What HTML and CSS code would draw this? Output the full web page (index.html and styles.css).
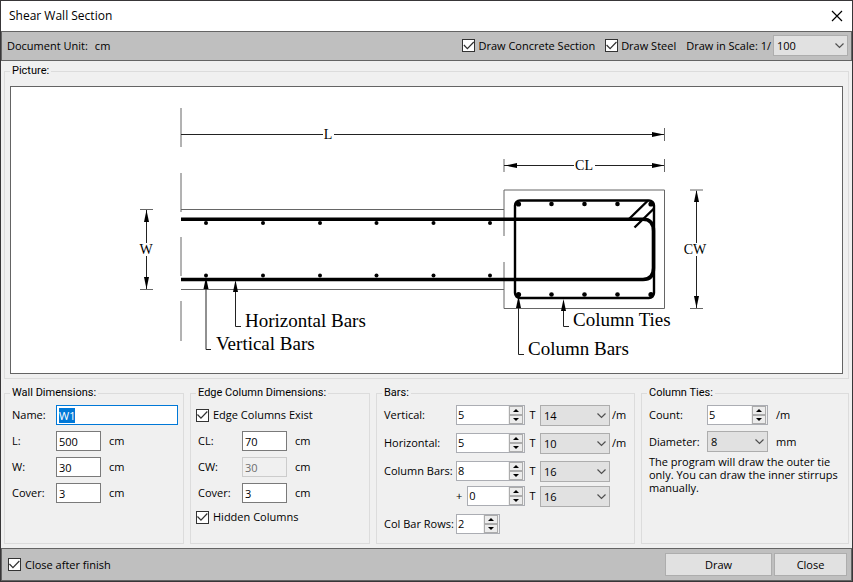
FILE: index.html
```html
<!DOCTYPE html>
<html lang="en">
<head>
<meta charset="utf-8">
<title>Shear Wall Section</title>
<link rel="stylesheet" href="styles.css">
</head>
<body>
<form class="window" onsubmit="return false">
  <header class="titlebar">
    <h1>Shear Wall Section</h1>
    <button type="button" class="close" aria-label="Close window"><svg width="12" height="12" viewBox="0 0 12 12"><path d="M1 1 L11 11 M11 1 L1 11"/></svg></button>
  </header>

  <div class="toolbar">
    <span class="unit">Document Unit:</span><span>cm</span>
    <div class="toolbar-options">
      <label class="check"><input type="checkbox" checked>Draw Concrete Section</label>
      <label class="check"><input type="checkbox" checked>Draw Steel</label>
      <label class="scale">Draw in Scale: 1/
        <span class="combo combo-scale"><select><option>100</option></select><svg viewBox="0 0 9 6"><path d="M0.5 0.5 L4.5 4.5 L8.5 0.5"/></svg></span>
      </label>
    </div>
  </div>

  <main class="content">
    <fieldset class="picture">
      <legend>Picture:</legend>
      <div class="canvas">
        <svg viewBox="11 87 831 286" role="img" aria-label="Shear wall section diagram">
          <defs>
            <path id="head" d="M0 0 L-2.5 12 L2.5 12 Z"/>
          </defs>
          <g class="outline">
            <path d="M181 108 V147 M181 173 V212 M181 237 V276 M181 301 V341"/>
            <path d="M181 209.5 H504 M181 289.5 H504"/>
            <path d="M504 236 V190 H664.5 V308.5 H504 V262"/>
            <path d="M664.5 128 V141 M504 159 V172 M664.5 159 V172"/>
            <path d="M140 209.5 H153 M140 289.5 H153 M690 190 H703 M690 308.5 H703"/>
          </g>
          <g class="dimension">
            <path d="M181 134.5 H323 M334 134.5 H664"/>
            <path d="M504 165.5 H574 M595 165.5 H664"/>
            <path d="M146.5 210 V243 M146.5 256 V289"/>
            <path d="M696.5 191 V243 M696.5 256 V308"/>
            <path d="M235.5 285 V326.5 H241 M206 285 V349.5 H211"/>
            <path d="M563.5 303 V326.5 H569 M518.5 303 V354.5 H524"/>
          </g>
          <g class="heads">
            <use href="#head" transform="translate(664 134.5) rotate(90)"/>
            <use href="#head" transform="translate(664 165.5) rotate(90)"/>
            <use href="#head" transform="translate(505 165.5) rotate(-90)"/>
            <use href="#head" transform="translate(146.5 210)"/>
            <use href="#head" transform="translate(146.5 289) rotate(180)"/>
            <use href="#head" transform="translate(696.5 190)"/>
            <use href="#head" transform="translate(696.5 308) rotate(180)"/>
            <use href="#head" transform="translate(235.5 280)"/>
            <use href="#head" transform="translate(206 277)"/>
            <use href="#head" transform="translate(563.5 299)"/>
            <use href="#head" transform="translate(518.5 296)"/>
          </g>
          <path class="bar" d="M181 219.3 H643 Q653.5 219.3 653.5 231 V268 Q653.5 279.5 643 279.5 H181"/>
          <rect class="tie" x="515" y="200.5" width="139" height="97.5" rx="5"/>
          <path class="tie" d="M628.5 219.5 L648 200.5 M634.5 227.5 L654 208.5"/>
          <g class="dots">
            <circle cx="206" cy="223" r="2"/><circle cx="263" cy="223" r="2"/><circle cx="320" cy="223" r="2"/><circle cx="376.5" cy="223" r="2"/><circle cx="433.5" cy="223" r="2"/><circle cx="490" cy="223" r="2"/>
            <circle cx="206" cy="275.5" r="2"/><circle cx="263" cy="275.5" r="2"/><circle cx="320" cy="275.5" r="2"/><circle cx="376.5" cy="275.5" r="2"/><circle cx="433.5" cy="275.5" r="2"/><circle cx="490" cy="275.5" r="2"/>
            <circle cx="518.5" cy="204" r="2.6"/><circle cx="551.5" cy="204" r="2.3"/><circle cx="584.5" cy="204" r="2.3"/><circle cx="617.5" cy="204" r="2.3"/><circle cx="651" cy="204" r="2.6"/>
            <circle cx="518.5" cy="294.5" r="2.6"/><circle cx="551.5" cy="294.5" r="2.3"/><circle cx="584.5" cy="294.5" r="2.3"/><circle cx="617.5" cy="294.5" r="2.3"/><circle cx="651" cy="294.5" r="2.6"/>
          </g>
          <g class="symbols">
            <text x="328" y="139">L</text>
            <text x="584" y="170">CL</text>
            <text x="146" y="254">W</text>
            <text x="695" y="254">CW</text>
          </g>
          <g class="names">
            <text x="245" y="327">Horizontal Bars</text>
            <text x="216" y="350">Vertical Bars</text>
            <text x="573" y="326">Column Ties</text>
            <text x="528" y="355">Column Bars</text>
          </g>
        </svg>
      </div>
    </fieldset>

    <div class="groups">
      <fieldset>
        <legend>Wall Dimensions:</legend>
        <div class="fields">
          <label for="name">Name:</label><input class="wide" id="name" type="text" value="W1">
          <label for="l">L:</label><input id="l" type="text" value="500"><span>cm</span>
          <label for="w">W:</label><input id="w" type="text" value="30"><span>cm</span>
          <label for="cover">Cover:</label><input id="cover" type="text" value="3"><span>cm</span>
        </div>
      </fieldset>

      <fieldset>
        <legend>Edge Column Dimensions:</legend>
        <div class="fields">
          <label class="check across"><input type="checkbox" checked>Edge Columns Exist</label>
          <label for="cl">CL:</label><input id="cl" type="text" value="70"><span>cm</span>
          <label for="cw">CW:</label><input id="cw" type="text" value="30" disabled><span>cm</span>
          <label for="ccover">Cover:</label><input id="ccover" type="text" value="3"><span>cm</span>
          <label class="check across last">
            <input type="checkbox" checked>Hidden Columns</label>
        </div>
      </fieldset>

      <fieldset>
        <legend>Bars:</legend>
        <div class="bars">
          <div class="bar-row">
            <label for="vert">Vertical:</label>
            <span class="spin"><input id="vert" type="number" value="5"><span class="steps"><button type="button" class="up" aria-label="More"></button><button type="button" class="down" aria-label="Less"></button></span></span>
            <label class="t" for="vert-d">T</label>
            <span class="combo"><select id="vert-d"><option>14</option></select><svg viewBox="0 0 9 6"><path d="M0.5 0.5 L4.5 4.5 L8.5 0.5"/></svg></span>
            <span>/m</span>
          </div>
          <div class="bar-row">
            <label for="horz">Horizontal:</label>
            <span class="spin"><input id="horz" type="number" value="5"><span class="steps"><button type="button" class="up" aria-label="More"></button><button type="button" class="down" aria-label="Less"></button></span></span>
            <label class="t" for="horz-d">T</label>
            <span class="combo"><select id="horz-d"><option>10</option></select><svg viewBox="0 0 9 6"><path d="M0.5 0.5 L4.5 4.5 L8.5 0.5"/></svg></span>
            <span>/m</span>
          </div>
          <div class="column-bars">
            <div class="bar-row">
              <label for="col">Column Bars:</label>
              <span class="spin"><input id="col" type="number" value="8"><span class="steps"><button type="button" class="up" aria-label="More"></button><button type="button" class="down" aria-label="Less"></button></span></span>
              <label class="t" for="col-d">T</label>
              <span class="combo"><select id="col-d"><option>16</option></select><svg viewBox="0 0 9 6"><path d="M0.5 0.5 L4.5 4.5 L8.5 0.5"/></svg></span>
            </div>
            <div class="bar-row">
              <span class="extra"><label for="add">+</label>
              <span class="spin"><input id="add" type="number" value="0"><span class="steps"><button type="button" class="up" aria-label="More"></button><button type="button" class="down" aria-label="Less"></button></span></span></span>
              <label class="t" for="add-d">T</label>
              <span class="combo"><select id="add-d"><option>16</option></select><svg viewBox="0 0 9 6"><path d="M0.5 0.5 L4.5 4.5 L8.5 0.5"/></svg></span>
            </div>
          </div>
          <div class="bar-row">
            <label for="rows">Col Bar Rows:</label>
            <span class="spin short"><input id="rows" type="number" value="2"><span class="steps"><button type="button" class="up" aria-label="More"></button><button type="button" class="down" aria-label="Less"></button></span></span>
          </div>
        </div>
      </fieldset>

      <fieldset>
        <legend>Column Ties:</legend>
        <div class="ties">
          <label for="count">Count:</label>
          <span class="spin"><input id="count" type="number" value="5"><span class="steps"><button type="button" class="up" aria-label="More"></button><button type="button" class="down" aria-label="Less"></button></span></span>
          <span>/m</span>
          <label for="dia">Diameter:</label>
          <span class="combo"><select id="dia"><option>8</option></select><svg viewBox="0 0 9 6"><path d="M0.5 0.5 L4.5 4.5 L8.5 0.5"/></svg></span>
          <span>mm</span>
        </div>
        <p class="note">The program will draw the outer tie only. You can draw the inner stirrups manually.</p>
      </fieldset>
    </div>
  </main>

  <footer class="footer">
    <label class="check"><input type="checkbox" checked>Close after finish</label>
    <div class="actions">
      <button type="submit" class="action draw">Draw</button>
      <button type="button" class="action">Close</button>
    </div>
  </footer>
</form>
<script src="script.js"></script>
</body>
</html>
```

FILE: script.js
```js
const nameField = document.getElementById("name");
nameField.focus();
nameField.select();

document.querySelectorAll(".spin").forEach((spin) => {
  const input = spin.querySelector("input");
  spin.querySelector(".up").addEventListener("click", () => input.stepUp());
  spin.querySelector(".down").addEventListener("click", () => input.stepDown());
});
```

FILE: styles.css
```css
* {
  box-sizing: border-box;
}

body {
  margin: 0;
  background: #f0f0f0;
  color: #000;
  font: 11px/14px "Open Sans", sans-serif;
}

input,
select,
button {
  margin: 0;
  font: inherit;
  color: inherit;
  border-radius: 0;
}

.window {
  display: flex;
  flex-direction: column;
  min-height: 100vh;
  border: 1px solid #383638;
}

.titlebar {
  display: flex;
  align-items: center;
  justify-content: space-between;
  height: 30px;
  padding: 0 8px;
  background: #fff;
}

.titlebar h1 {
  margin: 0;
  font-size: 12px;
  font-weight: 400;
}

.close {
  display: flex;
  padding: 0;
  margin-right: 1px;
  border: 0;
  background: none;
}

.close path {
  fill: none;
  stroke: #000;
  stroke-width: 1.2;
}

.toolbar,
.footer {
  display: flex;
  align-items: center;
  background: #bfbfbf;
  border: 1px solid #646464;
}

.toolbar {
  height: 30px;
  padding: 0 3px 1px 5px;
}

.unit {
  margin-right: 7px;
}

.toolbar-options {
  display: flex;
  align-items: center;
  gap: 10px;
  margin-left: auto;
}

.check {
  display: flex;
  align-items: center;
  gap: 4px;
}

.check input {
  appearance: none;
  width: 13px;
  height: 13px;
  flex: none;
  border: 1px solid #333;
  background: #fff;
}

.check input:checked::before {
  content: "";
  display: block;
  width: 11px;
  height: 11px;
  background: #333;
  clip-path: polygon(0 50%, 8% 42%, 36% 70%, 90% 14%, 98% 22%, 36% 86%);
}

.toolbar .check {
  gap: 3px;
}

.scale {
  display: flex;
  align-items: center;
  gap: 2px;
}

.combo {
  position: relative;
  display: block;
  width: 70px;
}

.combo-scale {
  width: 75px;
}

.combo select {
  appearance: none;
  display: block;
  width: 100%;
  height: 21px;
  padding: 0 18px 0 3px;
  border: 1px solid #adadad;
  background: #e1e1e1;
}

.combo svg {
  position: absolute;
  right: 4px;
  top: 8px;
  width: 9px;
  height: 6px;
  pointer-events: none;
}

.combo path {
  fill: none;
  stroke: #505050;
  stroke-width: 1.2;
}

.content {
  flex: 1;
  display: flex;
  flex-direction: column;
  gap: 7px;
  padding: 3px 3px 4px;
}

fieldset {
  min-width: 0;
  margin: 0;
  padding: 5px 5px 8px 7px;
  border: 1px solid #dcdcdc;
}

legend {
  margin-left: -2px;
  padding: 0 2px;
  font-family: Roboto, sans-serif;
}

.picture {
  flex: 1;
  display: flex;
  padding: 8px 5px 4px;
}

.picture legend {
  margin-left: 0;
}

.canvas {
  flex: 1;
  display: flex;
  border: 1px solid #646464;
  background: #fff;
}

.canvas svg {
  width: 100%;
}

.outline {
  fill: none;
  stroke: #666;
}

.dimension {
  fill: none;
  stroke: #222;
}

.bar {
  fill: none;
  stroke: #000;
  stroke-width: 3.6;
}

.tie {
  fill: none;
  stroke: #000;
  stroke-width: 2.4;
}

.symbols {
  font: 14px "Liberation Serif", serif;
  text-anchor: middle;
}

.names {
  font: 19px "Liberation Serif", serif;
}

.groups {
  display: grid;
  grid-template-columns: 180fr 180fr 259fr 208fr;
  gap: 6px;
}

.fields {
  display: grid;
  grid-template-columns: 44px 45px 1fr;
  grid-auto-rows: minmax(16px, auto);
  row-gap: 6px;
  align-items: center;
}

.fields span {
  padding-left: 8px;
}

.fields input[type="text"] {
  width: 100%;
  height: 20px;
  padding: 0 2px;
  border: 1px solid #7a7a7a;
  background: #fff;
  outline: 0;
}

.fields input[type="text"]:focus {
  border-color: #0078d7;
}

.fields input[type="text"]:disabled {
  border-color: #ccc;
  background: #f0f0f0;
  color: #6d6d6d;
}

input::selection {
  background: #0078d7;
  color: #fff;
}

.fields .wide {
  grid-column: 2 / -1;
}

.across {
  grid-column: 1 / -1;
  height: 20px;
  margin-left: -2px;
}

.across.last {
  height: 16px;
}

.bars {
  display: grid;
  gap: 7px;
}

.column-bars {
  display: grid;
  gap: 4px;
}

.bar-row {
  display: grid;
  grid-template-columns: 72px 69px 15px 70px auto;
  align-items: start;
  height: 21px;
  line-height: 20px;
  white-space: nowrap;
}

.bar-row > span:last-child:not(.combo, .spin) {
  padding-left: 2px;
}

.t {
  text-align: center;
}

.extra {
  grid-column: 2;
  display: flex;
  align-items: center;
  gap: 5px;
}

.extra .spin {
  flex: 1;
}

.spin {
  display: flex;
  min-width: 0;
  height: 20px;
  border: 1px solid #abadb3;
  background: #fff;
}

.spin.short {
  width: 44px;
}

.spin input {
  appearance: textfield;
  flex: 1;
  width: 0;
  min-width: 0;
  padding: 0 1px;
  border: 0;
  outline: 0;
  background: none;
}

.spin input::-webkit-inner-spin-button {
  appearance: none;
}

.steps {
  display: flex;
  flex-direction: column;
  width: 16px;
  padding: 0 1px;
  background: #f0f0f0;
}

.steps button {
  flex: 1;
  display: flex;
  align-items: center;
  justify-content: center;
  padding: 0;
  border: 1px solid #acacac;
  background: #ececec;
}

.steps button::before {
  content: "";
  border: 3px solid transparent;
}

.steps .up::before {
  border-top: 0;
  border-bottom-color: #000;
}

.steps .down::before {
  border-bottom: 0;
  border-top-color: #000;
}

.ties {
  display: grid;
  grid-template-columns: 58px 61px auto;
  gap: 6px 0;
  align-items: center;
}

.ties > span:nth-child(3n) {
  padding-left: 8px;
}

.ties .combo {
  width: 61px;
}

.note {
  margin: 3px 0 0;
  line-height: 13px;
}

.footer {
  justify-content: space-between;
  height: 33px;
  padding: 0 4px 0 6px;
}

.actions {
  display: flex;
  gap: 2px;
}

.action {
  width: 73px;
  height: 23px;
  padding: 0;
  border: 1px solid #adadad;
  background: #e1e1e1;
}

.draw {
  width: 107px;
}
```
